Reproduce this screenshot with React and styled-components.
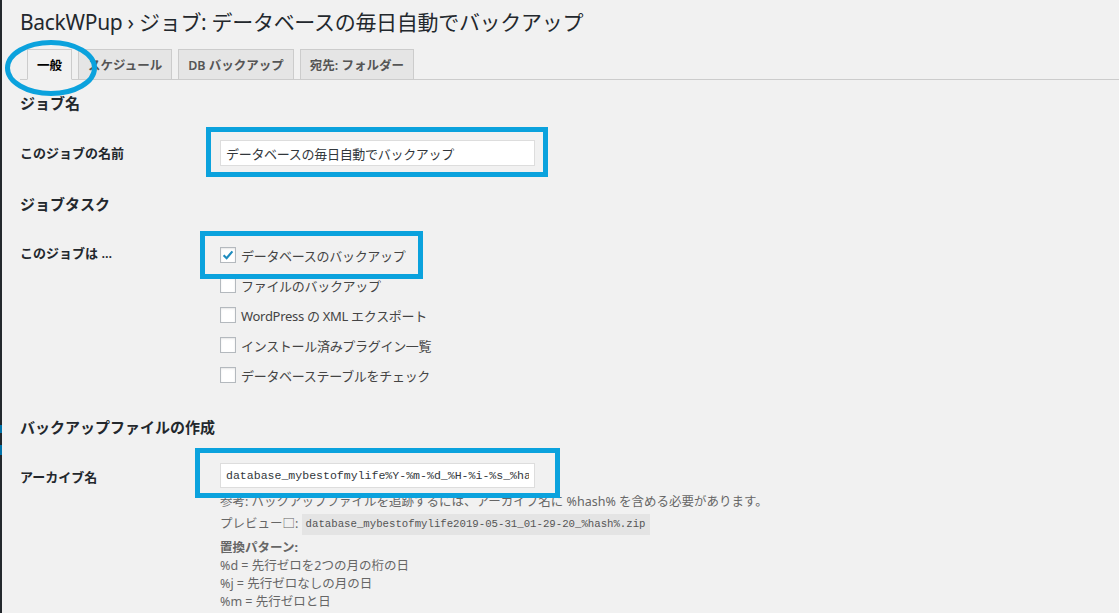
import React from 'react';
import styled, { createGlobalStyle } from 'styled-components';

const GlobalStyle = createGlobalStyle`
	html, body {
		margin: 0;
		padding: 0;
		background: #f1f1f1;
	}
	body {
		font-family: "Noto Sans", "Noto Sans CJK JP", sans-serif;
		font-size: 13px;
		color: #444;
		overflow: hidden;
	}
`;

const MARK = '#0ba2dd';

const tasks = [
	{ label: 'データベースのバックアップ', checked: true },
	{ label: 'ファイルのバックアップ' },
	{ label: 'WordPress の XML エクスポート' },
	{ label: 'インストール済みプラグイン一覧' },
	{ label: 'データベーステーブルをチェック' },
];

const patterns = [
	'%d = 先行ゼロを2つの月の桁の日',
	'%j = 先行ゼロなしの月の日',
	'%m = 先行ゼロと日',
	'%n = 先行ゼロなしの月',
];

const App = () => {
	return (
		<>
			<GlobalStyle />
			<Screen>
				<AdminEdge>
					<EdgeMark $top={425} $height={8} />
					<EdgeMark $top={445} $height={10} />
				</AdminEdge>
				<Content>
					<Title>BackWPup › ジョブ: データベースの毎日自動でバックアップ</Title>
					<TabBar>
						<Tab $active>
							一般
							<Ring viewBox="0 0 94 58">
								<ellipse cx="47" cy="29" rx="43.5" ry="25.5" fill="none" stroke={MARK} strokeWidth="5" />
							</Ring>
						</Tab>
						<Tab>スケジュール</Tab>
						<Tab>DB バックアップ</Tab>
						<Tab>宛先: フォルダー</Tab>
					</TabBar>

					<SectionTitle $first>ジョブ名</SectionTitle>
					<FormRow>
						<Label>このジョブの名前</Label>
						<Field>
							<Anchor>
								<TextInput type="text" readOnly value="データベースの毎日自動でバックアップ" />
								<Highlight $top={-13} $left={-14} $width={342} $height={50} />
							</Anchor>
						</Field>
					</FormRow>

					<SectionTitle>ジョブタスク</SectionTitle>
					<FormRow $pad={14} $bottom={14}>
						<Label $pad={19}>このジョブは ...</Label>
						<Field>
							<Anchor>
								{tasks.map(task => (
									<CheckRow key={task.label}>
										<CheckBox>
											{task.checked && (
												<svg width="12" height="12" viewBox="0 0 12 12">
													<path d="M1.6 6.3 L4.6 9.2 L10.4 2.4" fill="none" stroke="#1e8cbe" strokeWidth="2.2" />
												</svg>
											)}
										</CheckBox>
										{task.label}
									</CheckRow>
								))}
								<Highlight $top={-9} $left={-20} $width={223} $height={48} />
							</Anchor>
						</Field>
					</FormRow>

					<SectionTitle>バックアップファイルの作成</SectionTitle>
					<FormRow $pad={14}>
						<Label $pad={20}>アーカイブ名</Label>
						<Field>
							<Anchor>
								<TextInput
									$mono
									type="text"
									readOnly
									value="database_mybestofmylife%Y-%m-%d_%H-%i-%s_%hash%"
								/>
								<Highlight $top={-15} $left={-25} $width={365} $height={50} />
							</Anchor>
							<Note $gap={5}>参考: バックアップファイルを追跡するには、アーカイブ名に %hash% を含める必要があります。</Note>
							<Preview>
								プレビュー□: <Code>database_mybestofmylife2019-05-31_01-29-20_%hash%.zip</Code>
							</Preview>
							<PatternTitle>置換パターン:</PatternTitle>
							{patterns.map(line => (
								<Note key={line}>{line}</Note>
							))}
						</Field>
					</FormRow>
				</Content>
			</Screen>
		</>
	);
};

export default App;

const Screen = styled.div`
	display: flex;
	min-height: 613px;
	height: 613px;
	overflow: hidden;
`;

const AdminEdge = styled.div`
	position: relative;
	flex: 0 0 2px;
	background: #23282d;
`;

const EdgeMark = styled.span`
	position: absolute;
	left: 0;
	width: 2px;
	top: ${p => p.$top}px;
	height: ${p => p.$height}px;
	background: #0073aa;
`;

const Content = styled.div`
	flex: 1;
	padding-left: 18px;
`;

const Title = styled.h1`
	margin: 0;
	padding-top: 8px;
	font-size: 21px;
	line-height: 28px;
	font-weight: 400;
	color: #23282d;
	letter-spacing: -0.3px;
`;

const TabBar = styled.div`
	display: flex;
	align-items: flex-end;
	gap: 6px;
	margin-top: 12px;
	padding-left: 7px;
	border-bottom: 1px solid #ccc;
	height: 31px;
`;

const Tab = styled.div`
	position: relative;
	box-sizing: border-box;
	height: 31px;
	margin-bottom: -1px;
	padding: 0 9px;
	display: flex;
	align-items: center;
	border: 1px solid #ccc;
	border-bottom-color: ${p => (p.$active ? '#f1f1f1' : '#ccc')};
	background: ${p => (p.$active ? '#f1f1f1' : '#e5e5e5')};
	color: ${p => (p.$active ? '#000' : '#555')};
	font-size: 12.5px;
	font-weight: 600;
	white-space: nowrap;
`;

const Ring = styled.svg`
	position: absolute;
	left: -24px;
	top: -11px;
	width: 94px;
	height: 58px;
	pointer-events: none;
	z-index: 2;
`;

const SectionTitle = styled.h2`
	margin: 13px 0 12px;
	font-size: 15px;
	line-height: 20px;
	font-weight: 700;
	color: #23282d;
`;

const FormRow = styled.div`
	display: grid;
	grid-template-columns: 200px 1fr;
	padding: ${p => p.$pad || 15}px 0 ${p => p.$bottom || 15}px;
`;

const Label = styled.div`
	padding-top: ${p => (p.$pad || 19) - 15}px;
	font-size: 13px;
	line-height: 18px;
	font-weight: 600;
	color: #23282d;
`;

const Field = styled.div`
	display: flex;
	flex-direction: column;
	align-items: flex-start;
`;

const Anchor = styled.div`
	position: relative;
`;

const TextInput = styled.input`
	box-sizing: border-box;
	display: block;
	width: 315px;
	height: ${p => (p.$mono ? 25 : 26)}px;
	padding: 0 5px;
	margin: 0;
	border: 1px solid #ddd;
	background: #fff;
	color: #32373c;
	outline: none;
	font-family: ${p =>
		p.$mono ? '"Liberation Mono", monospace' : '"Noto Sans", "Noto Sans CJK JP", sans-serif'};
	font-size: ${p => (p.$mono ? '11.55px' : '13px')};
	letter-spacing: ${p => (p.$mono ? '0' : '-0.3px')};
`;

const Highlight = styled.div`
	position: absolute;
	box-sizing: border-box;
	top: ${p => p.$top}px;
	left: ${p => p.$left}px;
	width: ${p => p.$width}px;
	height: ${p => p.$height}px;
	border: 5px solid ${MARK};
	pointer-events: none;
	z-index: 2;
`;

const CheckRow = styled.label`
	display: flex;
	align-items: center;
	gap: 5px;
	height: 30px;
	font-size: 13px;
	color: #444;
	letter-spacing: -0.3px;
`;

const CheckBox = styled.span`
	box-sizing: border-box;
	width: 16px;
	height: 16px;
	display: flex;
	align-items: center;
	justify-content: center;
	background: #fff;
	border: 1px solid #b4b9be;
	box-shadow: inset 0 1px 2px rgba(0, 0, 0, 0.1);
`;

const Note = styled.div`
	margin-top: ${p => p.$gap || 0}px;
	font-size: 12.5px;
	line-height: 18px;
	color: #666;
	white-space: nowrap;
`;

const Preview = styled.div`
	margin-top: 2px;
	font-size: 12.5px;
	line-height: 22px;
	color: #666;
	white-space: nowrap;
`;

const Code = styled.code`
	display: inline-block;
	padding: 0 4px;
	background: #e4e4e4;
	color: #555;
	font-family: "Liberation Mono", monospace;
	font-size: 10.7px;
	line-height: 21px;
	vertical-align: middle;
`;

const PatternTitle = styled.div`
	margin-top: 3px;
	font-size: 12.5px;
	line-height: 19px;
	font-weight: 700;
	color: #666;
`;
